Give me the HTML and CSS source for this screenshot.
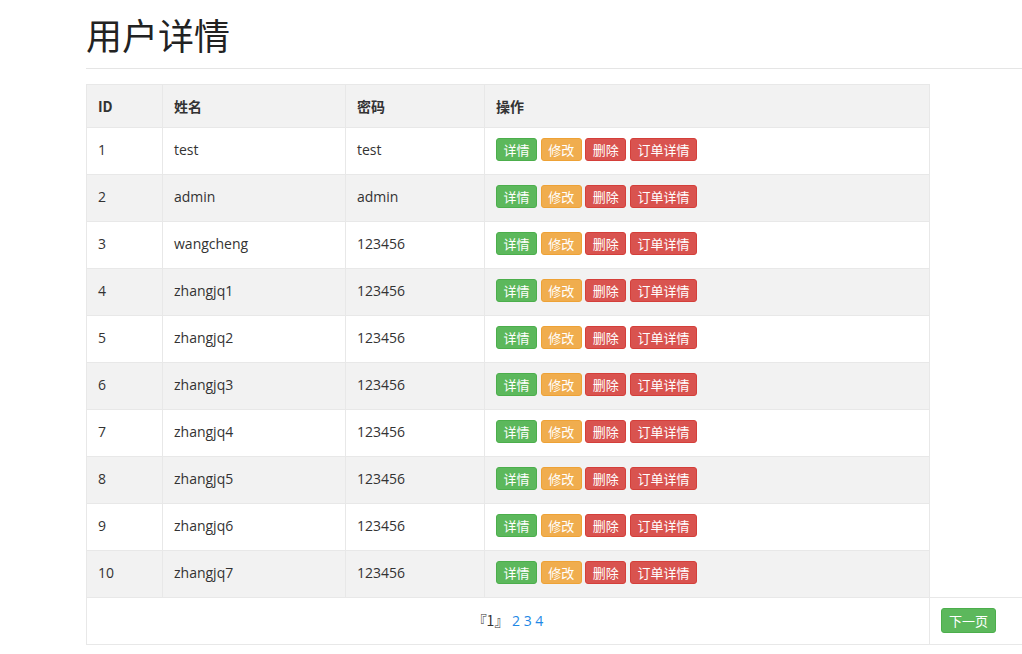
FILE: index.html
```html
<!DOCTYPE html>
<html lang="zh-CN">
<head>
<meta charset="utf-8">
<title>用户详情</title>
<link rel="stylesheet" href="styles.css">
</head>
<body>
<div class="wrap">
  <div class="page-header"><h1>用户详情</h1></div>
  <table class="grid">
    <colgroup>
      <col class="c-id"><col class="c-name"><col class="c-pwd"><col class="c-op"><col class="c-next">
    </colgroup>
    <thead>
      <tr><th>ID</th><th>姓名</th><th>密码</th><th>操作</th></tr>
    </thead>
    <tbody>
      <tr><td>1</td><td>test</td><td>test</td><td class="ops"><a class="btn green">详情</a> <a class="btn orange">修改</a> <a class="btn red">删除</a> <a class="btn red">订单详情</a></td></tr>
      <tr class="even"><td>2</td><td>admin</td><td>admin</td><td class="ops"><a class="btn green">详情</a> <a class="btn orange">修改</a> <a class="btn red">删除</a> <a class="btn red">订单详情</a></td></tr>
      <tr><td>3</td><td>wangcheng</td><td>123456</td><td class="ops"><a class="btn green">详情</a> <a class="btn orange">修改</a> <a class="btn red">删除</a> <a class="btn red">订单详情</a></td></tr>
      <tr class="even"><td>4</td><td>zhangjq1</td><td>123456</td><td class="ops"><a class="btn green">详情</a> <a class="btn orange">修改</a> <a class="btn red">删除</a> <a class="btn red">订单详情</a></td></tr>
      <tr><td>5</td><td>zhangjq2</td><td>123456</td><td class="ops"><a class="btn green">详情</a> <a class="btn orange">修改</a> <a class="btn red">删除</a> <a class="btn red">订单详情</a></td></tr>
      <tr class="even"><td>6</td><td>zhangjq3</td><td>123456</td><td class="ops"><a class="btn green">详情</a> <a class="btn orange">修改</a> <a class="btn red">删除</a> <a class="btn red">订单详情</a></td></tr>
      <tr><td>7</td><td>zhangjq4</td><td>123456</td><td class="ops"><a class="btn green">详情</a> <a class="btn orange">修改</a> <a class="btn red">删除</a> <a class="btn red">订单详情</a></td></tr>
      <tr class="even"><td>8</td><td>zhangjq5</td><td>123456</td><td class="ops"><a class="btn green">详情</a> <a class="btn orange">修改</a> <a class="btn red">删除</a> <a class="btn red">订单详情</a></td></tr>
      <tr><td>9</td><td>zhangjq6</td><td>123456</td><td class="ops"><a class="btn green">详情</a> <a class="btn orange">修改</a> <a class="btn red">删除</a> <a class="btn red">订单详情</a></td></tr>
      <tr class="even"><td>10</td><td>zhangjq7</td><td>123456</td><td class="ops"><a class="btn green">详情</a> <a class="btn orange">修改</a> <a class="btn red">删除</a> <a class="btn red">订单详情</a></td></tr>
      <tr class="pager"><td colspan="4" class="pages"><span class="cur">『1』</span> <a class="pg">2</a> <a class="pg">3</a> <a class="pg">4</a></td><td class="next-cell"><a class="btn green next">下一页</a></td></tr>
    </tbody>
  </table>
</div>
</body>
</html>
```

FILE: styles.css
```css
html, body {
  margin: 0;
  padding: 0;
  overflow: hidden;
  background: #fff;
}
body {
  font-family: "Open Sans", "Noto Sans CJK SC", sans-serif;
  font-size: 14px;
  color: #333;
}
.wrap {
  margin-left: 86px;
  width: 1000px;
}
.page-header {
  padding: 14px 0 14px;
  border-bottom: 1px solid #e5e5e5;
}
.page-header h1 {
  margin: 0;
  font-size: 36px;
  line-height: 40px;
  font-weight: 400;
  font-family: "Noto Sans CJK SC", sans-serif;
  color: #222;
}
.grid {
  margin-top: 15px;
  border-collapse: collapse;
  border-spacing: 0;
  table-layout: fixed;
  width: 953px;
}
.c-id { width: 76px; }
.c-name { width: 183px; }
.c-pwd { width: 139px; }
.c-op { width: 445px; }
.c-next { width: 110px; }
.grid th, .grid td {
  border: 1px solid #e8e8e8;
  text-align: left;
  line-height: 20px;
  white-space: nowrap;
}
.grid th {
  background: #f2f2f2;
  font-weight: 700;
  padding: 11px 11px 11px;
  font-family: "Noto Sans CJK SC", sans-serif;
}
.grid td {
  padding: 12px 11px 14px;
  background: #fff;
}
.grid td.ops {
  padding: 10px 11px 13px;
}
.grid tr.even td {
  background: #f2f2f2;
}
.btn {
  display: inline-block;
  box-sizing: border-box;
  height: 23px;
  line-height: 21px;
  padding: 0 6.5px;
  border: 1px solid transparent;
  border-radius: 3px;
  color: #fff;
  font-family: "Noto Sans CJK SC", sans-serif;
  font-size: 13px;
  vertical-align: middle;
}
.btn.green { background: #5cb85c; border-color: #4cae4c; }
.btn.orange { background: #f0ad4e; border-color: #eea236; }
.btn.red { background: #d9534f; border-color: #d43f3a; }
.grid td.pages {
  text-align: center;
  padding: 11px 11px 12px;
}
.cur {
  font-family: "Noto Sans CJK SC", sans-serif;
  color: #333;
}
.pg {
  color: #1e88e5;
}
.grid td.next-cell {
  padding: 10px 11px 11px;
}
.btn.next {
  height: 25px;
  line-height: 23px;
  padding: 0 7px;
}
```
